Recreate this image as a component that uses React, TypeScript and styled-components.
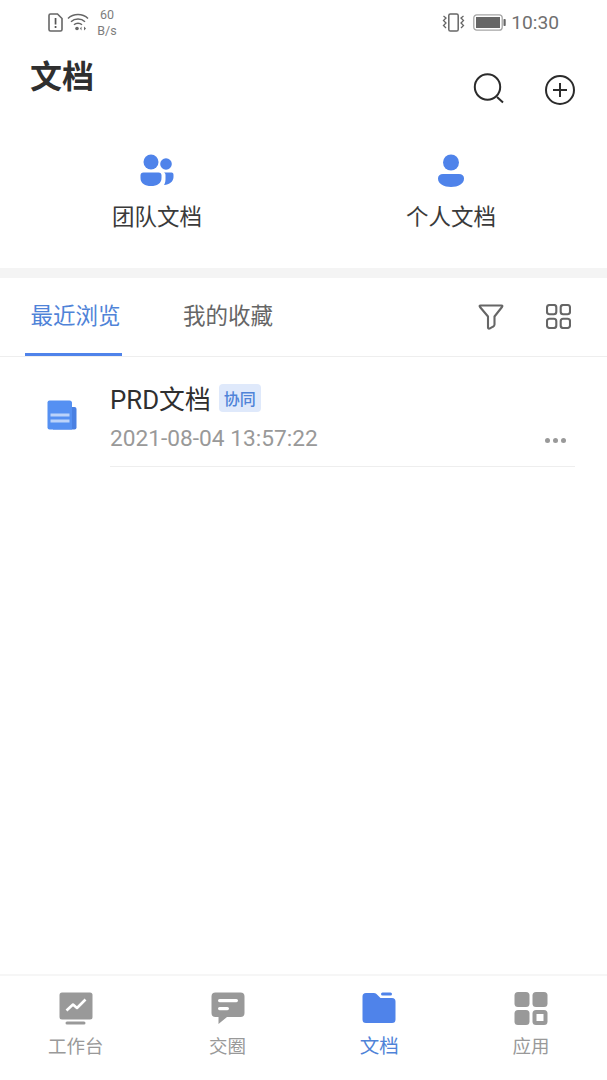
import React from "react";
import styled, { createGlobalStyle } from "styled-components";

const Global = createGlobalStyle`
  html, body { margin: 0; padding: 0; background: #fff; }
  body { font-family: Roboto, "Noto Sans CJK SC", sans-serif; }
  * { box-sizing: border-box; }
`;

const BLUE = "#4f83ea";

const Page = styled.div`
  width: 607px;
  height: 1080px;
  display: flex;
  flex-direction: column;
  background: #fff;
  overflow: hidden;
`;

const StatusBar = styled.div`
  height: 44px;
  display: flex;
  align-items: center;
  justify-content: space-between;
  padding: 0 48px 0 48px;
  color: #707070;
`;

const StatusGroup = styled.div`
  display: flex;
  align-items: center;
`;

const NetSpeed = styled.div`
  font-size: 12.5px;
  line-height: 16px;
  text-align: center;
  color: #7d7d7d;
  margin: 2px 0 0 8px;
  width: 20px;
`;

const Clock = styled.span`
  font-size: 19.2px;
  color: #6f6f6f;
  margin-left: 5px;
`;

const Header = styled.header`
  height: 86px;
  display: flex;
  justify-content: space-between;
  padding: 0 32px 0 30px;
`;

const Title = styled.h1`
  margin: 11px 0 0;
  font-size: 32px;
  line-height: 44px;
  font-weight: 700;
  color: #2f2f2f;
`;

const HeaderActions = styled.div`
  display: flex;
  gap: 40px;
  padding-top: 29px;
  align-items: flex-start;
`;

const Shortcuts = styled.div`
  height: 148px;
  display: grid;
  grid-template-columns: 314px 274px;
  padding-top: 24px;
  border-bottom: 10px solid #f4f4f4;
`;

const Shortcut = styled.div`
  display: flex;
  flex-direction: column;
  align-items: center;
  gap: 17px;
`;

const ShortcutLabel = styled.span`
  font-size: 22.5px;
  line-height: 26px;
  color: #3a3a3a;
`;

const Tabs = styled.div`
  height: 79px;
  display: flex;
  align-items: stretch;
  border-bottom: 1px solid #eeeeee;
  padding-left: 25px;
  position: relative;
`;

const Tab = styled.div<{ $active?: boolean }>`
  width: ${(p) => (p.$active ? "97px" : "auto")};
  height: 78px;
  margin-right: ${(p) => (p.$active ? "61px" : "0")};
  padding-top: 23px;
  padding-left: ${(p) => (p.$active ? "4px" : "0")};
  white-space: nowrap;
  text-align: center;
  font-size: 22.5px;
  line-height: 30px;
  color: ${(p) => (p.$active ? "#4f83d8" : "#666")};
  border-bottom: 3px solid ${(p) => (p.$active ? BLUE : "transparent")};
`;

const TabTools = styled.div`
  margin-left: auto;
  display: flex;
  gap: 42px;
  padding: 26px 36px 0 0;
  align-items: flex-start;
`;

const List = styled.main`
  flex: 1;
`;

const Row = styled.div`
  display: flex;
  padding: 25px 32px 0 47px;
`;

const RowIcon = styled.div`
  width: 63px;
  padding-top: 18px;
  flex: none;
`;

const RowBody = styled.div`
  flex: 1;
  height: 85px;
  border-bottom: 1px solid #eeeeee;
  position: relative;
`;

const RowTitle = styled.div`
  display: flex;
  align-items: center;
  height: 30px;
  font-size: 25.8px;
  color: #2f2f2f;
`;

const Badge = styled.span`
  margin: 2px 0 0 8px;
  width: 42px;
  height: 28px;
  border-radius: 4px;
  background: #dfe9fb;
  color: #4f83d8;
  font-size: 16px;
  font-weight: 500;
  display: flex;
  align-items: center;
  justify-content: center;
`;

const RowTime = styled.div`
  margin-top: 14px;
  font-size: 22.7px;
  line-height: 26px;
  color: #999;
`;

const More = styled.div`
  position: absolute;
  right: 9px;
  top: 56px;
  display: flex;
  gap: 3px;
`;

const Dot = styled.i`
  width: 5px;
  height: 5px;
  border-radius: 50%;
  background: #999;
`;

const Nav = styled.nav`
  height: 106px;
  display: grid;
  grid-template-columns: repeat(4, 1fr);
  border-top: 2px solid #f6f6f6;
  padding-top: 16px;
`;

const NavItem = styled.div<{ $active?: boolean }>`
  display: flex;
  flex-direction: column;
  align-items: center;
  color: ${(p) => (p.$active ? "#4f83d8" : "#999")};
  font-size: ${(p) => (p.$active ? "19.5px" : "18.5px")};
`;

const NavLabel = styled.span`
  line-height: 24px;
  margin-top: 10px;
`;

const NavIconBox = styled.svg`
  display: block;
`;

const SimIcon = () => (
  <svg width="15" height="19" viewBox="0 0 15 19">
    <path d="M2.5 1H9.5L14 5.5V16.5Q14 18 12.5 18H2.5Q1 18 1 16.5V2.5Q1 1 2.5 1Z" fill="none" stroke="#666" strokeWidth="1.6" />
    <rect x="6.7" y="5" width="1.7" height="6.5" fill="#555" />
    <rect x="6.7" y="13" width="1.7" height="2" fill="#555" />
  </svg>
);

const WifiIcon = () => (
  <svg width="22" height="20" viewBox="0 0 22 20" style={{ marginLeft: 4 }}>
    <g fill="none" stroke="#666" strokeWidth="1.5">
      <path d="M1 6.5C6.5 1.2 15.5 1.2 21 6.5" />
      <path d="M4 9.8C7.8 6.2 14.2 6.2 18 9.8" />
      <path d="M7 12.8C9.2 10.8 12.8 10.8 15 12.8" />
    </g>
    <circle cx="10" cy="16.5" r="1.8" fill="#666" />
    <path d="M14.5 14.5V18.5L13 16.5ZM17 14.5V18.5L19 16.5Z" fill="#666" />
  </svg>
);

const VibrateIcon = () => (
  <svg width="23" height="19" viewBox="0 0 23 19">
    <rect x="6.8" y="1" width="9.4" height="17" rx="1.6" fill="none" stroke="#666" strokeWidth="1.5" />
    <path d="M1.5 3L4 5L1.5 7.5L4 10L1.5 12.5L4 15" fill="none" stroke="#666" strokeWidth="1.3" />
    <path d="M21.5 3L19 5L21.5 7.5L19 10L21.5 12.5L19 15" fill="none" stroke="#666" strokeWidth="1.3" />
  </svg>
);

const BatteryIcon = () => (
  <svg width="33" height="17" viewBox="0 0 33 17" style={{ marginLeft: 8 }}>
    <rect x="0.8" y="0.8" width="28.4" height="15.4" rx="3" fill="none" stroke="#a5a5a5" strokeWidth="1.3" />
    <rect x="3" y="3" width="24" height="11" fill="#666" />
    <rect x="30.5" y="5" width="2.2" height="7" rx="0.8" fill="#666" />
  </svg>
);

const SearchIcon = () => (
  <svg width="32" height="31" viewBox="0 0 32 31">
    <circle cx="14.5" cy="14" r="12.7" fill="none" stroke="#2b2b2b" strokeWidth="2" />
    <path d="M24 24L30 29.5" fill="none" stroke="#2b2b2b" strokeWidth="2" />
  </svg>
);

const PlusIcon = () => (
  <svg width="30" height="30" viewBox="0 0 30 30" style={{ marginTop: 2 }}>
    <circle cx="15" cy="15" r="14" fill="none" stroke="#2b2b2b" strokeWidth="2" />
    <path d="M15 8V22M8 15H22" fill="none" stroke="#2b2b2b" strokeWidth="2" />
  </svg>
);

const TeamIcon = () => (
  <svg width="34" height="33" viewBox="0 0 34 33">
    <circle cx="11" cy="8" r="7.5" fill={BLUE} />
    <circle cx="26" cy="10" r="5.8" fill={BLUE} />
    <path d="M3.5 18.5H18.5C20.5 18.5 21.5 19.5 21.5 21.5V24C21.5 29.5 17 32 11 32C5 32 0.5 29.5 0.5 24V21.5C0.5 19.5 1.5 18.5 3.5 18.5Z" fill={BLUE} />
    <path d="M24 18.5H31.5C33 18.5 33.5 19.5 33.5 21V23C33.5 27.5 29.5 30.5 24 31C25.5 29 25.5 26 25.5 24V21C25.5 20 25 19 24 18.5Z" fill={BLUE} />
  </svg>
);

const PersonIcon = () => (
  <svg width="26" height="33" viewBox="0 0 26 33">
    <circle cx="13" cy="8.5" r="8" fill={BLUE} />
    <path d="M5 20H21C24 20 26 21.5 26 24.5C26 30 20 33 13 33C6 33 0 30 0 24.5C0 21.5 2 20 5 20Z" fill={BLUE} />
  </svg>
);

const FilterIcon = () => (
  <svg width="26" height="26" viewBox="0 0 26 26">
    <path d="M2.5 1.5H23.5Q25 1.5 24 3L16.5 12.5V20.5Q16.5 22 15 22.7L11.5 24.6Q10 25 10 23.5V12.5L2 3Q1 1.5 2.5 1.5Z" fill="none" stroke="#666" strokeWidth="2.1" strokeLinejoin="round" />
  </svg>
);

const GridIcon = () => (
  <svg width="25" height="25" viewBox="0 0 25 25">
    <g fill="none" stroke="#666" strokeWidth="2.1">
      <rect x="1" y="1" width="9.3" height="9.3" rx="2.5" />
      <rect x="14.7" y="1" width="9.3" height="9.3" rx="2.5" />
      <rect x="1" y="14.7" width="9.3" height="9.3" rx="2.5" />
      <rect x="14.7" y="14.7" width="9.3" height="9.3" rx="2.5" />
    </g>
  </svg>
);

const DocIcon = () => (
  <svg width="30" height="30" viewBox="0 0 30 30">
    <path d="M24 7H27.5Q29.5 7 29.5 9V27.5Q29.5 29.5 27.5 29.5H6V7Z" fill="#4a80e2" />
    <path d="M2.5 0.5H22.5Q25 0.5 25 3V29.5H2.5Q0.5 29.5 0.5 27.5V2.5Q0.5 0.5 2.5 0.5Z" fill="#5590f2" />
    <rect x="3.5" y="13.5" width="19" height="3" fill="#bcd3fa" />
    <rect x="3.5" y="19.5" width="19" height="3" fill="#bcd3fa" />
  </svg>
);

const WorkIcon = () => (
  <NavIconBox width="34" height="33" viewBox="0 0 34 33">
    <rect x="0.5" y="0.5" width="33" height="27" rx="2.5" fill="currentColor" />
    <rect x="6.5" y="29.5" width="20" height="3" rx="1.5" fill="currentColor" />
    <path d="M7.5 18.5L14 12.5L18 16L26.5 7.5" fill="none" stroke="#fff" strokeWidth="2.6" strokeLinejoin="round" />
  </NavIconBox>
);

const ChatIcon = () => (
  <NavIconBox width="34" height="33" viewBox="0 0 34 33">
    <path d="M4.5 0.5H29.5Q33.5 0.5 33.5 4.5V21Q33.5 25 29.5 25H16L7.5 32V25H4.5Q0.5 25 0.5 21V4.5Q0.5 0.5 4.5 0.5Z" fill="currentColor" />
    <rect x="7" y="7" width="20" height="3.2" rx="1.6" fill="#fff" />
    <rect x="7" y="15" width="11" height="3.2" rx="1.6" fill="#fff" />
  </NavIconBox>
);

const FolderIcon = () => (
  <NavIconBox width="34" height="33" viewBox="0 0 34 33" style={{ color: BLUE }}>
    <path d="M4 1H12Q14 1 15.5 3L18.5 6H30Q33.5 6 33.5 9.5V27.5Q33.5 31 30 31H4Q0.5 31 0.5 27.5V4.5Q0.5 1 4 1Z" fill="currentColor" />
    <rect x="19" y="0.5" width="11" height="3" rx="1.5" fill="currentColor" />
  </NavIconBox>
);

const AppsIcon = () => (
  <NavIconBox width="34" height="33" viewBox="0 0 34 33">
    <rect x="0.5" y="0" width="15" height="15" rx="3.5" fill="currentColor" />
    <rect x="18.5" y="0" width="15" height="15" rx="3.5" fill="currentColor" />
    <rect x="0.5" y="18" width="15" height="15" rx="3.5" fill="currentColor" />
    <rect x="18.5" y="18" width="15" height="15" rx="3.5" fill="currentColor" />
    <rect x="22.5" y="22" width="7" height="7" fill="#fff" />
  </NavIconBox>
);

export default function App() {
  return (
    <Page>
      <Global />
      <StatusBar>
        <StatusGroup>
          <SimIcon />
          <WifiIcon />
          <NetSpeed>60<br />B/s</NetSpeed>
        </StatusGroup>
        <StatusGroup>
          <VibrateIcon />
          <BatteryIcon />
          <Clock>10:30</Clock>
        </StatusGroup>
      </StatusBar>
      <Header>
        <Title>文档</Title>
        <HeaderActions>
          <SearchIcon />
          <PlusIcon />
        </HeaderActions>
      </Header>
      <Shortcuts>
        <Shortcut>
          <TeamIcon />
          <ShortcutLabel>团队文档</ShortcutLabel>
        </Shortcut>
        <Shortcut>
          <PersonIcon />
          <ShortcutLabel>个人文档</ShortcutLabel>
        </Shortcut>
      </Shortcuts>
      <Tabs>
        <Tab $active>最近浏览</Tab>
        <Tab>我的收藏</Tab>
        <TabTools>
          <FilterIcon />
          <GridIcon />
        </TabTools>
      </Tabs>
      <List>
        <Row>
          <RowIcon>
            <DocIcon />
          </RowIcon>
          <RowBody>
            <RowTitle>
              PRD文档
              <Badge>协同</Badge>
            </RowTitle>
            <RowTime>2021-08-04 13:57:22</RowTime>
            <More>
              <Dot />
              <Dot />
              <Dot />
            </More>
          </RowBody>
        </Row>
      </List>
      <Nav>
        <NavItem>
          <WorkIcon />
          <NavLabel>工作台</NavLabel>
        </NavItem>
        <NavItem>
          <ChatIcon />
          <NavLabel>交圈</NavLabel>
        </NavItem>
        <NavItem $active>
          <FolderIcon />
          <NavLabel>文档</NavLabel>
        </NavItem>
        <NavItem>
          <AppsIcon />
          <NavLabel>应用</NavLabel>
        </NavItem>
      </Nav>
    </Page>
  );
}
